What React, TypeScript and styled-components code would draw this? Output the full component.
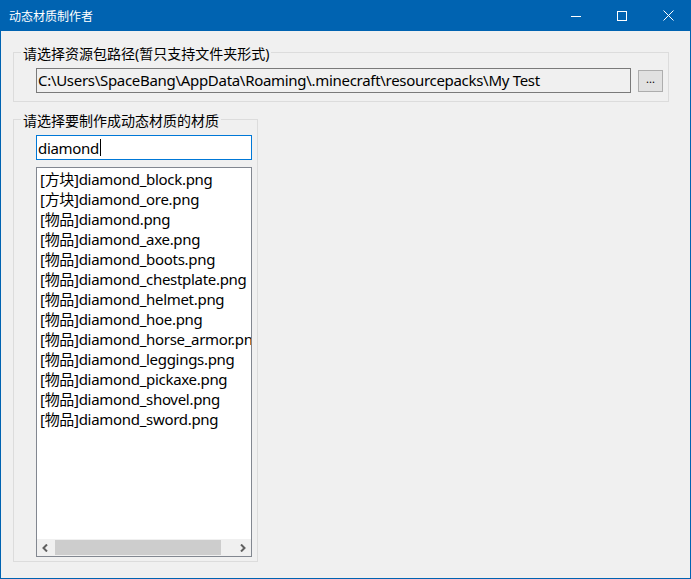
import React from "react";
import styled, { createGlobalStyle } from "styled-components";

const GlobalStyle = createGlobalStyle`
  html, body { margin: 0; padding: 0; background: #F0F0F0; }
  body { font-family: "Noto Sans", "Noto Sans CJK SC", sans-serif; }
  * { box-sizing: border-box; }
`;

const Window = styled.div`
  width: 691px;
  height: 579px;
  border: 1px solid #0063b1;
  border-top: none;
  background: #f0f0f0;
  display: flex;
  flex-direction: column;
  overflow: hidden;
`;

const TitleBar = styled.div`
  height: 31px;
  background: #0063b1;
  display: flex;
  align-items: center;
  margin: 0 -1px;
  padding-left: 1px;
`;

const Title = styled.div`
  flex: 1;
  padding-left: 8px;
  color: #fff;
  font-family: "Noto Sans CJK SC", sans-serif;
  font-size: 12px;
  line-height: 16px;
`;

const CaptionButton = styled.div`
  width: 46px;
  height: 31px;
  display: flex;
  align-items: center;
  justify-content: center;
`;

const Content = styled.div`
  flex: 1;
  padding: 11px 21px 0 12px;
  display: flex;
  flex-direction: column;
`;

const Group = styled.fieldset<{ $width?: number; $bottom: number; $top: number }>`
  margin: ${(p) => p.$top}px 0 0 0;
  padding: 0 5px ${(p) => p.$bottom}px 22px;
  border: 1px solid #dcdcdc;
  min-width: 0;
  width: ${(p) => (p.$width ? `${p.$width}px` : "auto")};
`;

const Legend = styled.legend`
  margin-left: -15px;
  padding: 4px 2px 0 2px;
  font-size: 14px;
  line-height: 16px;
  white-space: nowrap;
  color: #000;
`;

const PathRow = styled.div`
  margin-top: 6px;
  display: flex;
  align-items: center;
  gap: 7px;
`;

const PathBox = styled.div`
  flex: 1;
  height: 25px;
  border: 1px solid #7a7a7a;
  background: #f0f0f0;
  padding-left: 1px;
  font-size: 15px;
  letter-spacing: -0.3px;
  line-height: 22px;
  white-space: nowrap;
  overflow: hidden;
  color: #000;
`;

const BrowseButton = styled.div`
  width: 25px;
  height: 22px;
  border: 1px solid #adadad;
  background: #e1e1e1;
  display: flex;
  align-items: center;
  justify-content: center;
  font-size: 11px;
  line-height: 10px;
  padding-bottom: 4px;
  color: #000;
`;

const SearchBox = styled.div`
  margin-top: 6px;
  height: 25px;
  border: 1px solid #0078d7;
  background: #fff;
  padding-left: 1px;
  font-size: 15px;
  letter-spacing: -0.3px;
  line-height: 22px;
  display: flex;
  align-items: center;
  color: #000;
`;

const Caret = styled.span`
  display: inline-block;
  width: 1px;
  height: 17px;
  background: #000;
  margin-left: 1px;
`;

const ListBox = styled.div`
  margin-top: 7px;
  height: 390px;
  border: 1px solid #828790;
  background: #fff;
  display: flex;
  flex-direction: column;
  overflow: hidden;
`;

const Items = styled.div`
  flex: 1;
  padding: 1px 0 0 3px;
  overflow: hidden;
`;

const Item = styled.div`
  font-size: 15px;
  letter-spacing: -0.3px;
  line-height: 20px;
  white-space: nowrap;
  color: #000;
`;

const HScroll = styled.div`
  height: 17px;
  background: #f0f0f0;
  display: flex;
  align-items: stretch;
`;

const Arrow = styled.div`
  width: 17px;
  display: flex;
  align-items: center;
  justify-content: center;
`;

const Track = styled.div`
  flex: 1;
  padding: 1px 13px 1px 1px;
  display: flex;
`;

const Thumb = styled.div`
  flex: 1;
  background: #cdcdcd;
`;

const items = [
  "[方块]diamond_block.png",
  "[方块]diamond_ore.png",
  "[物品]diamond.png",
  "[物品]diamond_axe.png",
  "[物品]diamond_boots.png",
  "[物品]diamond_chestplate.png",
  "[物品]diamond_helmet.png",
  "[物品]diamond_hoe.png",
  "[物品]diamond_horse_armor.png",
  "[物品]diamond_leggings.png",
  "[物品]diamond_pickaxe.png",
  "[物品]diamond_shovel.png",
  "[物品]diamond_sword.png",
];

export default function App() {
  return (
    <>
      <GlobalStyle />
      <Window>
        <TitleBar>
          <Title>动态材质制作者</Title>
          <CaptionButton>
            <svg width="10" height="10" viewBox="0 0 10 10">
              <line x1="0" y1="5.5" x2="10" y2="5.5" stroke="#fff" strokeWidth="1" />
            </svg>
          </CaptionButton>
          <CaptionButton>
            <svg width="10" height="10" viewBox="0 0 10 10">
              <rect x="0.5" y="0.5" width="9" height="9" fill="none" stroke="#fff" strokeWidth="1" />
            </svg>
          </CaptionButton>
          <CaptionButton>
            <svg width="11" height="11" viewBox="0 0 11 11">
              <path d="M0.5 0.5 L10.5 10.5 M10.5 0.5 L0.5 10.5" stroke="#fff" strokeWidth="1" />
            </svg>
          </CaptionButton>
        </TitleBar>
        <Content>
          <Group $top={0} $bottom={8}>
            <Legend>请选择资源包路径(暂只支持文件夹形式)</Legend>
            <PathRow>
              <PathBox>C:\Users\SpaceBang\AppData\Roaming\.minecraft\resourcepacks\My Test</PathBox>
              <BrowseButton>...</BrowseButton>
            </PathRow>
          </Group>
          <Group $top={7} $bottom={4} $width={245}>
            <Legend>请选择要制作成动态材质的材质</Legend>
            <SearchBox>
              diamond
              <Caret />
            </SearchBox>
            <ListBox>
              <Items>
                {items.map((t) => (
                  <Item key={t}>{t}</Item>
                ))}
              </Items>
              <HScroll>
                <Arrow>
                  <svg width="7" height="8" viewBox="0 0 7 8">
                    <path d="M5 0.5 L1.5 4 L5 7.5" fill="none" stroke="#606060" strokeWidth="2" />
                  </svg>
                </Arrow>
                <Track>
                  <Thumb />
                </Track>
                <Arrow>
                  <svg width="7" height="8" viewBox="0 0 7 8">
                    <path d="M2 0.5 L5.5 4 L2 7.5" fill="none" stroke="#606060" strokeWidth="2" />
                  </svg>
                </Arrow>
              </HScroll>
            </ListBox>
          </Group>
        </Content>
      </Window>
    </>
  );
}
